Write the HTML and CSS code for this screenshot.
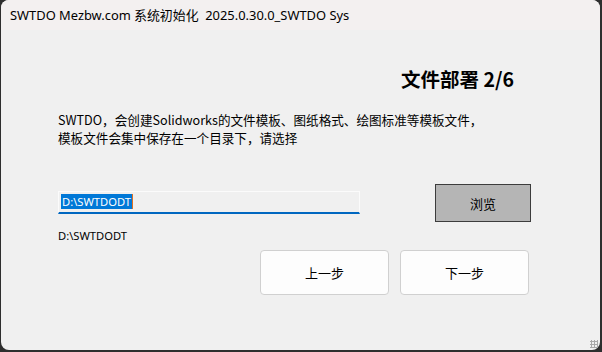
FILE: index.html
```html
<!DOCTYPE html>
<html lang="zh-CN">
<head>
  <meta charset="UTF-8">
  <title>SWTDO Mezbw.com 系统初始化</title>
  <link rel="stylesheet" href="styles.css">
</head>
<body>

<div class="window">
  <div class="titlebar">SWTDO Mezbw.com 系统初始化&nbsp; 2025.0.30.0_SWTDO Sys</div>

  <div class="content">
    <div class="heading">文件部署 2/6</div>

    <p class="intro">SWTDO，会创建Solidworks的文件模板、图纸格式、绘图标准等模板文件，<br>模板文件会集中保存在一个目录下，请选择</p>

    <div class="pathRow">
      <div class="field"><span class="sel">D:\SWTDODT</span><span class="caret"></span></div>
      <div class="browse">浏览</div>
    </div>

    <div class="pathLabel">D:\SWTDODT</div>

    <div class="navRow">
      <div class="navButton">上一步</div>
      <div class="navButton">下一步</div>
    </div>
  </div>
  <div class="grip"></div>
</div>

</body>
</html>
```

FILE: styles.css
```css
html, body { margin: 0; height: 100%; }
body { background-color: #2e2e2e; font-family: "Noto Sans", "Noto Sans CJK SC", sans-serif; color: #000; overflow: hidden; }
.window { position: relative; height: 350px; margin: 0 2px 0 1px; background-color: #f0f0f0; border-radius: 8px; overflow: hidden; }
.titlebar { height: 30px; line-height: 30px; padding-left: 9px; font-size: 12.9px; background-color: #f3f0f0; white-space: nowrap; }
.content { display: flex; flex-direction: column; }
.heading { align-self: flex-end; margin: 36px 86px 0 0; font-size: 19.5px; line-height: 26px; font-weight: bold; font-family: "Noto Sans CJK SC", sans-serif; }
.intro { margin: 19px 0 0 57px; font-size: 12.6px; line-height: 18px; font-family: "Noto Sans CJK SC", sans-serif; }
.pathRow { display: flex; align-items: center; margin: 35px 0 0 57px; }
.field { width: 298px; height: 20px; display: flex; align-items: center; padding-left: 2px; border: 1px solid #fbfbfb; border-bottom: 2px solid #0067c0; background-color: #f0f0f0; }
.sel { background-color: #0078d7; color: #fff; font-size: 11.2px; line-height: 15px; padding: 0 1px; }
.caret { width: 1px; height: 15px; background-color: #e07020; }
.browse { width: 94px; height: 36px; margin: 2px 0 0 75px; display: flex; align-items: center; justify-content: center; border: 1px solid #3c3c3c; background-color: #b5b5b5; font-size: 13px; }
.pathLabel { margin: 6px 0 0 57px; font-size: 11.2px; line-height: 16px; }
.navRow { display: flex; gap: 11px; margin: 6px 0 0 259px; }
.navButton { width: 127px; height: 43px; display: flex; align-items: center; justify-content: center; background-color: #fdfdfd; border: 1px solid #d0d0d0; border-radius: 4px; font-size: 13px; }
.grip { position: absolute; right: 2px; bottom: 2px; width: 8px; height: 8px; background-image: radial-gradient(#a8a8a8 1px, transparent 1.2px); background-size: 3px 3px; }
```
